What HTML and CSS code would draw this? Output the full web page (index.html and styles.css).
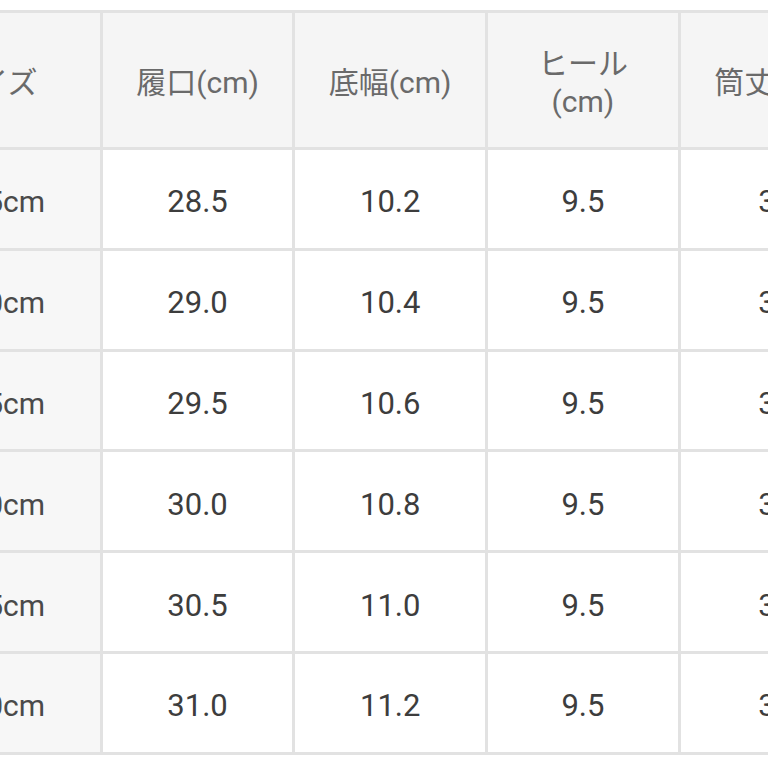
FILE: index.html
```html
<!DOCTYPE html>
<html lang="ja">
<head>
<meta charset="utf-8">
<title>サイズ表</title>
<link rel="stylesheet" href="styles.css">
</head>
<body>
<table class="size-table">
  <thead>
    <tr>
      <th class="label">サイズ</th>
      <th>履口(cm)</th>
      <th>底幅(cm)</th>
      <th>ヒール<br>(cm)</th>
      <th>筒丈(cm)</th>
    </tr>
  </thead>
  <tbody>
    <tr><td class="label">22.5cm</td><td>28.5</td><td>10.2</td><td>9.5</td><td>35</td></tr>
    <tr><td class="label">23.0cm</td><td>29.0</td><td>10.4</td><td>9.5</td><td>35</td></tr>
    <tr><td class="label">23.5cm</td><td>29.5</td><td>10.6</td><td>9.5</td><td>35</td></tr>
    <tr><td class="label">24.0cm</td><td>30.0</td><td>10.8</td><td>9.5</td><td>35</td></tr>
    <tr><td class="label">24.5cm</td><td>30.5</td><td>11.0</td><td>9.5</td><td>35</td></tr>
    <tr><td class="label">25.0cm</td><td>31.0</td><td>11.2</td><td>9.5</td><td>35</td></tr>
  </tbody>
</table>
</body>
</html>
```

FILE: styles.css
```css
html, body {
  margin: 0;
  padding: 0;
  background: #ffffff;
  overflow: hidden;
}

body {
  font-family: Roboto, "Noto Sans CJK JP", sans-serif;
  padding-top: 10px;
}

.size-table {
  border-collapse: separate;
  border-spacing: 0;
  table-layout: fixed;
  width: 966.5px;
  margin-left: -93px;
  border-top: 3px solid #e2e2e2;
  border-left: 3px solid #e2e2e2;
}

.size-table th,
.size-table td {
  box-sizing: border-box;
  width: 192.7px;
  border-right: 3px solid #e2e2e2;
  border-bottom: 3px solid #e2e2e2;
  text-align: center;
  vertical-align: middle;
  padding: 6px 24px 0;
}

.size-table th {
  height: 137px;
  padding-top: 5px;
  background: #f5f5f5;
  color: #6a6a6a;
  font-weight: 400;
  font-size: 30px;
  line-height: 38px;
}

.size-table td {
  height: 100.8px;
  background: #ffffff;
  color: #3d3d3d;
  font-size: 31px;
}

.size-table th.label {
  padding-left: 12px;
  padding-right: 36px;
}

.size-table td.label {
  padding-left: 14px;
  padding-right: 34px;
  background: #f7f7f7;
  color: #4a4a4a;
  font-size: 30px;
}
```
